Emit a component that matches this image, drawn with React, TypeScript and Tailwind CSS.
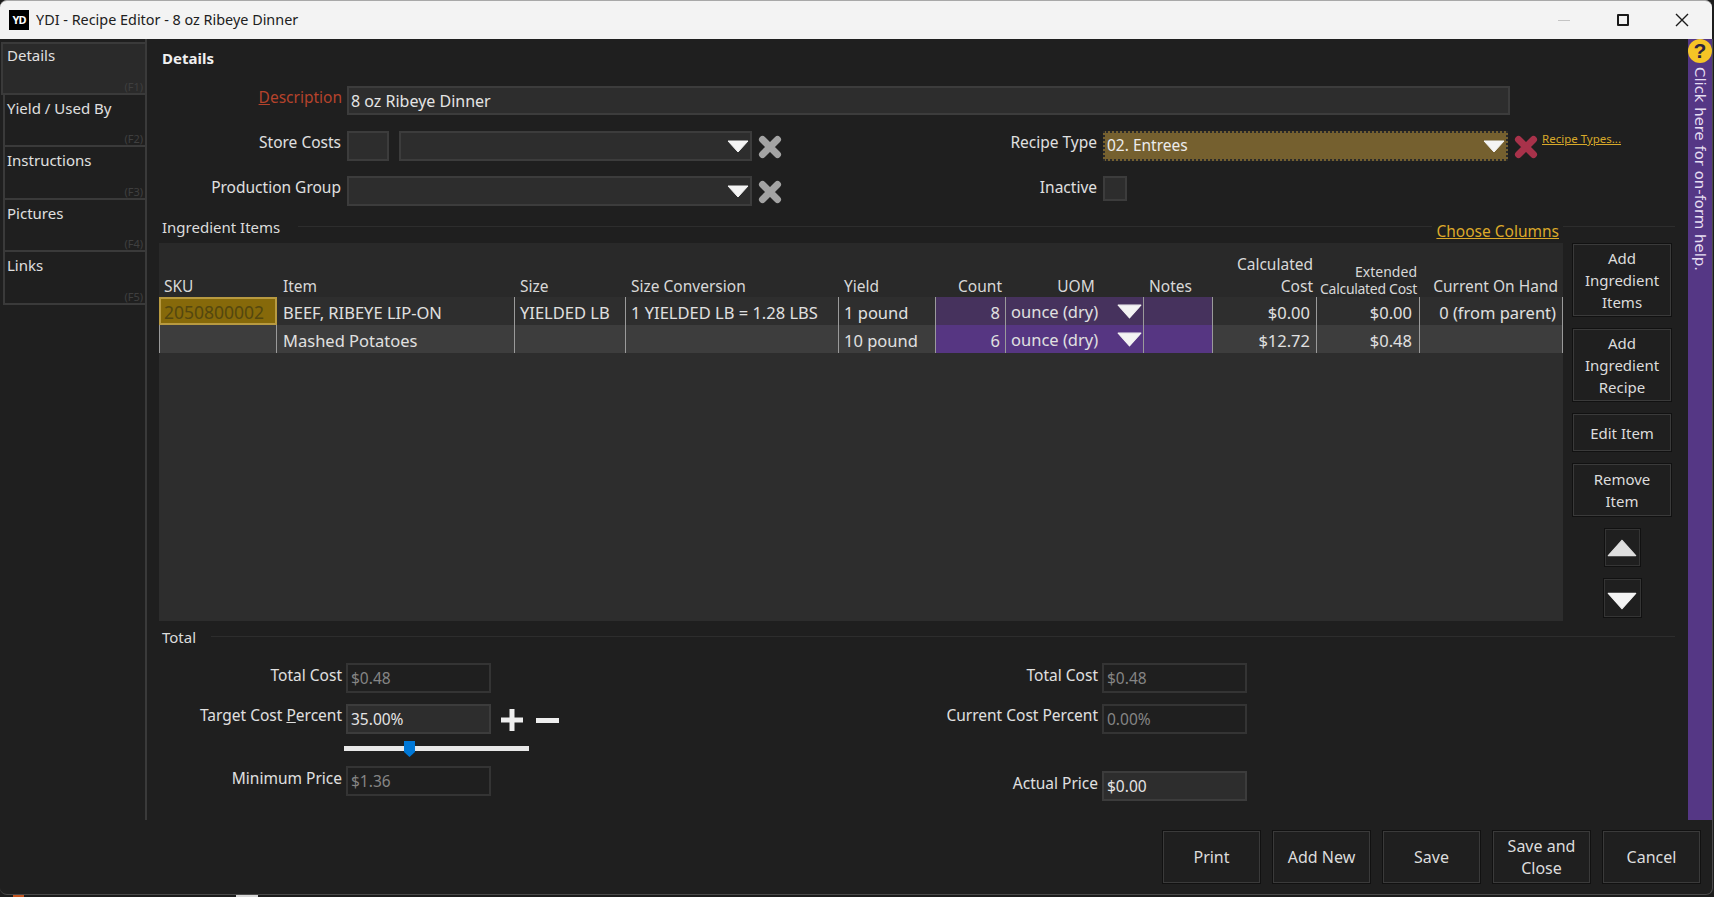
const FONT = "font-['Noto_Sans',sans-serif]";

function CrossIcon({ color, size = 26 }: { color: string; size?: number }) {
  return (
    <svg width={size} height={size} viewBox="0 0 26 26">
      <path d="M5.5 5.5 20.5 20.5M20.5 5.5 5.5 20.5" stroke={color} strokeWidth="7" strokeLinecap="round" />
    </svg>
  );
}

function Tri({ down = true, w = 22, h = 13, color = "#f4f4f4" }: { down?: boolean; w?: number; h?: number; color?: string }) {
  return (
    <svg width={w} height={h} viewBox="0 0 22 13" preserveAspectRatio="none">
      <path d={down ? "M1 1H21L11 12Z" : "M1 12H21L11 1Z"} fill={color} stroke={color} strokeLinejoin="round" />
    </svg>
  );
}

function Label({ w, children, red = false }: { w: string; children: React.ReactNode; red?: boolean }) {
  return (
    <div className={`${w} shrink-0 text-right text-[15.5px] leading-[22px] ${red ? "text-[#b5432c]" : "text-[#e0e0e0]"}`}>
      {children}
    </div>
  );
}

function Field({ w, value = "", dim = false, filled = true }: { w: string; value?: string; dim?: boolean; filled?: boolean }) {
  return (
    <div
      className={`${w} h-[30px] shrink-0 border-2 px-[3px] pt-[2px] flex items-center text-[15.5px] ${filled ? "bg-[#2d2d2d] border-[#3c3c3c]" : "bg-[#1f1f1f] border-[#343434]"} ${dim ? "text-[#858585]" : "text-[#e4e4e4]"}`}
    >
      {value}
    </div>
  );
}

function SelectBox({ w, value = "" }: { w: string; value?: string }) {
  return (
    <div className={`${w} h-[30px] shrink-0 bg-[#2d2d2d] border-2 border-[#3c3c3c] flex items-center justify-between pl-[3px] pr-[1px] text-[15.5px] text-[#e4e4e4]`}>
      <span>{value}</span>
      <Tri />
    </div>
  );
}

const tabs = ["Details", "Yield / Used By", "Instructions", "Pictures", "Links"];

function Sidebar() {
  return (
    <div className="w-[147px] shrink-0 border-r-2 border-[#3a3a3a] pt-[3px]">
      {tabs.map((tab, i) => (
        <div
          key={tab}
          className={`h-[52.5px] flex flex-col justify-between border-2 border-r-0 border-[#3a3a3a] ${i === 0 ? "ml-[1px] bg-[#2a2a2a] pl-[4px]" : "ml-[3px] border-t-0 pl-[2px]"}`}
        >
          <div className={`text-[15px] leading-[20px] text-[#e0e0e0] ${i === 0 ? "mt-[1px]" : "mt-[3px]"}`}>{tab}</div>
          <div className="text-right pr-[2px] text-[11px] leading-[13px] text-[#3f3f3f]">(F{i + 1})</div>
        </div>
      ))}
    </div>
  );
}

const cols = [
  "w-[118px]",
  "w-[238px]",
  "w-[111px]",
  "w-[213px]",
  "w-[97px]",
  "w-[70px]",
  "w-[138px]",
  "w-[69px]",
  "w-[104px]",
  "w-[103px]",
  "w-[143px]",
];

const rows = [
  { item: "BEEF, RIBEYE LIP-ON", size: "YIELDED LB", conv: "1 YIELDED LB = 1.28 LBS", yld: "1 pound", count: "8", calc: "$0.00", ext: "$0.00", hand: "0 (from parent)" },
  { item: "Mashed Potatoes", size: "", conv: "", yld: "10 pound", count: "6", calc: "$12.72", ext: "$0.48", hand: "" },
];

function Grid() {
  return (
    <div className="w-[1404px] h-[378px] shrink-0 bg-[#2d2d2d] text-[#e0e0e0]">
      <div className="h-[54px] flex items-end bg-[#292929] text-[15.5px] leading-[22px] text-[#d8d8d8]">
        <div className={`${cols[0]} pl-[5px]`}>SKU</div>
        <div className={`${cols[1]} pl-[6px]`}>Item</div>
        <div className={`${cols[2]} pl-[5px]`}>Size</div>
        <div className={`${cols[3]} pl-[5px]`}>Size Conversion</div>
        <div className={`${cols[4]} pl-[5px]`}>Yield</div>
        <div className={`${cols[5]} pr-[4px] text-right`}>Count</div>
        <div className={`${cols[6]} text-center pl-[2px]`}>UOM</div>
        <div className={`${cols[7]} pl-[5px]`}>Notes</div>
        <div className={`${cols[8]} pr-[4px] text-right`}>Calculated<br />Cost</div>
        <div className={`${cols[9]} pr-[3px] text-right text-[14px] leading-[17px]`}>Extended<br /><span className="tracking-[-0.3px]">Calculated Cost</span></div>
        <div className={`${cols[10]} pr-[5px] text-right`}>Current On Hand</div>
      </div>
      {rows.map((row, i) => {
        const bg = i === 0 ? "bg-[#2e2e2e]" : "bg-[#3d3d3d]";
        const purple = i === 0 ? "bg-[#46325d]" : "bg-[#563682]";
        const sep = "border-r border-[#9a9a9a]";
        return (
          <div key={row.item} className={`h-[28px] flex text-[16.5px] leading-[31px] ${bg}`}>
            {i === 0 ? (
              <div className={`${cols[0]} bg-[#86690a] border-2 border-[#b89a40] text-[#54470f] text-[17.5px] leading-[26px] pl-[3px]`}>2050800002</div>
            ) : (
              <div className={`${cols[0]} ${sep} border-l border-[#9a9a9a]`} />
            )}
            <div className={`${cols[1]} ${sep} pl-[6px]`}>{row.item}</div>
            <div className={`${cols[2]} ${sep} pl-[5px]`}>{row.size}</div>
            <div className={`${cols[3]} ${sep} pl-[5px]`}>{row.conv}</div>
            <div className={`${cols[4]} ${sep} pl-[5px]`}>{row.yld}</div>
            <div className={`${cols[5]} ${sep} ${purple} pr-[5px] text-right`}>{row.count}</div>
            <div className={`${cols[6]} ${sep} ${purple} pl-[5px] flex items-center justify-between pr-[1px]`}>
              <span>ounce (dry)</span>
              <Tri w={25} h={15} />
            </div>
            <div className={`${cols[7]} ${sep} ${purple}`} />
            <div className={`${cols[8]} ${sep} pr-[6px] text-right`}>{row.calc}</div>
            <div className={`${cols[9]} ${sep} pr-[7px] text-right`}>{row.ext}</div>
            <div className={`${cols[10]} ${sep} pr-[6px] text-right`}>{row.hand}</div>
          </div>
        );
      })}
    </div>
  );
}

function SideButton({ h, children }: { h: string; children: React.ReactNode }) {
  return (
    <div className={`${h} w-[100px] bg-[#1f1f1f] border border-[#111111] shadow-[inset_0_0_0_1px_#3a3a3a] flex items-center justify-center text-center text-[15px] leading-[22px] text-[#dcdcdc]`}>
      <div>{children}</div>
    </div>
  );
}

function ArrowButton({ down }: { down: boolean }) {
  return (
    <div className={`${down ? "h-[40px] w-[39px] pt-[6px]" : "h-[39px] w-[37px]"} flex items-center justify-center border border-[#111111] shadow-[inset_0_0_0_1px_#353535]`}>
      <Tri down={down} w={30} h={18} color={down ? "#f4f4f4" : "#dedede"} />
    </div>
  );
}

function FooterButton({ children }: { children: React.ReactNode }) {
  return (
    <div className="w-[99px] h-[54px] bg-[#1f1f1f] border border-[#111111] shadow-[inset_0_0_0_1px_#3a3a3a] flex items-center justify-center text-center text-[16px] leading-[22px] text-[#dcdcdc]">
      <div>{children}</div>
    </div>
  );
}

export default function App() {
  return (
    <div className={`${FONT} w-[1714px] h-[897px] overflow-hidden bg-[#1c1c1c] flex flex-col`}>
      {/* title bar */}
      <div className="h-[39px] w-[1712px] shrink-0 bg-[#f3f3f3] border-t border-[#a8a8a8] rounded-t-[7px] flex items-center">
        <div className="ml-[9px] w-[20px] h-[20px] bg-black text-white text-[11px] font-bold leading-[20px] text-center tracking-[-1px] shrink-0">YD</div>
        <div className="ml-[7px] mb-[1px] text-[14.4px] text-[#202020]">YDI - Recipe Editor - 8 oz Ribeye Dinner</div>
        <div className="flex-1" />
        <div className="w-[12px] h-[1px] bg-[#c4c4c4]" />
        <div className="ml-[47px] w-[12px] h-[12px] border-2 border-[#1a1a1a] rounded-[1px]" />
        <svg className="ml-[46px] mr-[23px]" width="14" height="14" viewBox="0 0 14 14">
          <path d="M1 1 13 13M13 1 1 13" stroke="#1a1a1a" strokeWidth="1.4" />
        </svg>
      </div>

      <div className="w-[1713px] h-[856px] shrink-0 bg-[#1f1f1f] flex flex-col border-b border-r border-[#4a4a4a] rounded-b-[7px] text-[#e0e0e0]">
        <div className="h-[781px] flex shrink-0">
          <Sidebar />

          <div className="flex-1 flex flex-col min-w-0">
            <div className="h-[47px] pl-[15px] pt-[8px] text-[15px] leading-[22px] font-bold text-[#f0f0f0]">Details</div>

            {/* description */}
            <div className="h-[45px] flex items-start">
              <Label w="w-[195px]" red>
                <span className="underline">D</span>escription
              </Label>
              <div className="w-[1163px] h-[29px] ml-[5px] bg-[#2d2d2d] border-2 border-[#3c3c3c] pl-[2px] flex items-center text-[16px] text-[#e4e4e4]">8 oz Ribeye Dinner</div>
            </div>

            {/* store costs / recipe type */}
            <div className="h-[45px] flex items-start">
              <Label w="w-[194px]">Store Costs</Label>
              <div className="ml-[6px] flex items-start">
                <Field w="w-[42px]" />
                <div className="ml-[10px]">
                  <SelectBox w="w-[353px]" />
                </div>
                <div className="ml-[5px] mt-[3px]">
                  <CrossIcon color="#a3a3a3" />
                </div>
              </div>
              <Label w="w-[315px] ml-[-1px]">Recipe Type</Label>
              <div className="ml-[6px] w-[405px] h-[30px] bg-[#75602f] border-2 border-dotted border-[#2a2a2a] flex items-center justify-between pl-[2px] pr-[1px] text-[15.5px] text-[#ececec]">
                <span>02. Entrees</span>
                <Tri />
              </div>
              <div className="ml-[5px] mt-[3px]">
                <CrossIcon color="#a8324a" />
              </div>
              <a className="ml-[3px] mt-[-1px] text-[11.5px] leading-[18px] text-[#d8a92a] underline">Recipe Types...</a>
            </div>

            {/* production group / inactive */}
            <div className="h-[39px] flex items-start">
              <Label w="w-[194px]">Production Group</Label>
              <div className="ml-[6px] flex items-start">
                <SelectBox w="w-[405px]" />
                <div className="ml-[5px] mt-[3px]">
                  <CrossIcon color="#a3a3a3" />
                </div>
              </div>
              <Label w="w-[315px] ml-[-1px]">Inactive</Label>
              <div className="ml-[6px] w-[24px] h-[25px] bg-[#2d2d2d] border-2 border-[#3c3c3c]" />
            </div>

            {/* ingredient items */}
            <div className="pr-[13px]">
              <div className="h-[28px] flex items-start">
                <span className="pl-[15px] pr-[18px] text-[15px] leading-[24px] text-[#dcdcdc]">Ingredient Items</span>
                <div className="flex-1 h-[1px] mt-[11px] bg-[#2d2d2d]" />
                <a className="mx-[4px] mt-[6px] text-[15.5px] leading-[20px] text-[#dca92a] underline">Choose Columns</a>
                <div className="w-[112px] h-[1px] mt-[11px] bg-[#2d2d2d]" />
              </div>
              <div className="flex">
                <div className="ml-[12px]">
                  <Grid />
                </div>
                <div className="ml-[9px] w-[100px] flex flex-col items-center">
                  <SideButton h="h-[74px]">Add<br />Ingredient<br />Items</SideButton>
                  <div className="mt-[11px]"><SideButton h="h-[74px]">Add<br />Ingredient<br />Recipe</SideButton></div>
                  <div className="mt-[11px]"><SideButton h="h-[39px]">Edit Item</SideButton></div>
                  <div className="mt-[11px]"><SideButton h="h-[54px]">Remove<br />Item</SideButton></div>
                  <div className="mt-[11px]"><ArrowButton down={false} /></div>
                  <div className="mt-[11px]"><ArrowButton down /></div>
                </div>
              </div>
            </div>

            {/* total */}
            <div className="mt-[5px] pr-[13px] flex items-center h-[22px] pl-[15px] text-[15px] text-[#dcdcdc]">
              <span className="pr-[15px]">Total</span>
              <div className="flex-1 h-[1px] bg-[#2d2d2d] mt-[-2px]" />
            </div>
            <div className="mt-[15px] flex items-start">
              <div className="w-[640px] shrink-0">
                <div className="flex items-start">
                  <Label w="w-[195px] pt-[1px]">Total Cost</Label>
                  <div className="ml-[4px]"><Field w="w-[145px]" value="$0.48" dim filled={false} /></div>
                </div>
                <div className="mt-[11px] flex items-start">
                  <Label w="w-[195px]">
                    Target Cost <span className="underline">P</span>ercent
                  </Label>
                  <div className="ml-[4px] flex items-center">
                    <Field w="w-[145px]" value="35.00%" />
                    <svg className="ml-[9px] mt-[2px]" width="24" height="24" viewBox="0 0 24 24">
                      <path d="M9.5 1h5v8.5H23v5h-8.5V23h-5v-8.5H1v-5h8.5Z" fill="#eeeeee" />
                    </svg>
                    <div className="ml-[12px] mt-[2px] w-[23px] h-[5px] bg-[#eeeeee]" />
                  </div>
                </div>
                <div className="ml-[197px] mt-[7px] h-[15px] w-[185px] flex items-center">
                  <div className="w-[60px] h-[5px] bg-[#e8e8e8]" />
                  <svg width="11" height="16" viewBox="0 0 11 16" className="shrink-0">
                    <path d="M0 0H11V11L5.5 16 0 11Z" fill="#0078d7" />
                  </svg>
                  <div className="flex-1 h-[5px] bg-[#e8e8e8]" />
                </div>
                <div className="mt-[10px] flex items-start">
                  <Label w="w-[195px] pt-[1px]">Minimum Price</Label>
                  <div className="ml-[4px]"><Field w="w-[145px]" value="$1.36" dim filled={false} /></div>
                </div>
              </div>
              <div className="flex-1">
                <div className="flex items-start">
                  <Label w="w-[311px] pt-[1px]">Total Cost</Label>
                  <div className="ml-[4px]"><Field w="w-[145px]" value="$0.48" dim filled={false} /></div>
                </div>
                <div className="mt-[11px] flex items-start">
                  <Label w="w-[311px]">Current Cost Percent</Label>
                  <div className="ml-[4px]"><Field w="w-[145px]" value="0.00%" dim filled={false} /></div>
                </div>
                <div className="mt-[37px] flex items-start">
                  <Label w="w-[311px] pt-[1px]">Actual Price</Label>
                  <div className="ml-[4px]"><Field w="w-[145px]" value="$0.00" /></div>
                </div>
              </div>
            </div>
          </div>

          {/* help strip */}
          <div className="w-[24px] shrink-0 bg-[#553785] flex flex-col items-center">
            <div className="w-[24px] h-[24px] shrink-0 rounded-full bg-[#f5c526] text-[#2b2440] text-[21px] font-bold leading-[24px] text-center font-['Liberation_Sans',sans-serif]">?</div>
            <div className="mt-[4px] [writing-mode:vertical-rl] text-[14.9px] leading-[22px] text-[#e6def2] font-['DejaVu_Sans',sans-serif]">Click here for on-form help.</div>
          </div>
        </div>

        {/* footer */}
        <div className="flex justify-end gap-[11px] pt-[10px] pr-[11px]">
          <FooterButton>Print</FooterButton>
          <FooterButton>Add New</FooterButton>
          <FooterButton>Save</FooterButton>
          <FooterButton>Save and<br />Close</FooterButton>
          <FooterButton>Cancel</FooterButton>
        </div>
      </div>

      {/* what shows of the taskbar below the window */}
      <div className="h-[2px] flex">
        <div className="ml-[13px] w-[11px] bg-[#c2541f]" />
        <div className="ml-[212px] w-[22px] bg-[#d8d8d8]" />
      </div>
    </div>
  );
}
